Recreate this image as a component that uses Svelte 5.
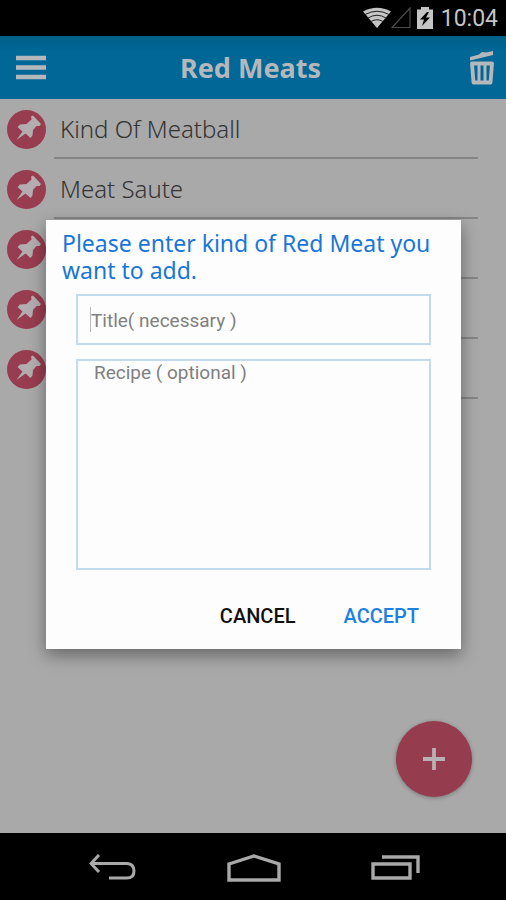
<script lang="ts">
	let items = $state(['Kind Of Meatball', 'Meat Saute', '', '', '']);
	let title = $state('');
	let recipe = $state('');
</script>

<div class="screen">
	<div class="status">
		<svg width="28" height="22" viewBox="0 0 28 22">
			<path d="M0 4.500Q14-3 28 4.500L14 21Z" fill="#c4c4c4" />
			<path d="M2 7.500Q14 1 26 7.500M5 11Q14 5.500 23 11M8 14.500Q14 11 20 14.500" fill="none" stroke="#222" stroke-width="1" />
		</svg>
		<svg class="signal" width="20" height="22" viewBox="0 0 20 22">
			<path d="M19 1V20.500H1Z" fill="none" stroke="#4c4c4c" stroke-width="1.200" />
		</svg>
		<svg class="battery" width="16" height="24" viewBox="0 0 16 24">
			<path d="M4 1H12V3.500H16V23H0V3.500H4Z" fill="#c4c4c4" />
			<path d="M10 6L3 13.500H7L5 20L13 11.500H9L12 6Z" fill="#000" />
		</svg>
		<span>10:04</span>
	</div>

	<header>
		<button aria-label="Menu">
			<svg width="30" height="26" viewBox="0 0 30 26">
				<path d="M0 3H30M0 12.500H30M0 22H30" stroke="#b5b8ba" stroke-width="4.500" />
			</svg>
		</button>
		<h1>Red Meats</h1>
		<button aria-label="Delete">
			<svg width="26" height="34" viewBox="0 0 26 34">
				<path d="M1 6L10 3.500L13 1L17 1.500L24 0V4L1 9.500Z" fill="#b5b8ba" />
				<path d="M3 12.500H23L21.500 31.500H4.500Z" fill="none" stroke="#b5b8ba" stroke-width="3.800" stroke-linejoin="round" />
				<path d="M10 13V31M16 13V31" stroke="#b5b8ba" stroke-width="3" />
			</svg>
		</button>
	</header>

	<main>
		<ul>
			{#each items as item}
				<li>
					<span class="pin">
						<svg width="39" height="39" viewBox="0 0 39 39">
							<path d="M24 6.500L26 5.500L34 14L32.500 16L29.500 16L26 20L25.500 25.500L23.500 28L18.500 23.500L9.500 30L15.500 21.500L10.500 17L13 14.500L19.500 14L24.500 9.500Z" fill="#b3adaf" />
						</svg>
					</span>
					<span class="name">{item}</span>
				</li>
			{/each}
		</ul>

		<button class="add" aria-label="Add">
			<svg width="22" height="22" viewBox="0 0 22 22">
				<path d="M11 0V22M0 11H22" stroke="#b8b0b2" stroke-width="3.800" />
			</svg>
		</button>

		<div class="overlay">
			<div class="dialog" role="dialog" aria-labelledby="dialog-title">
				<h2 id="dialog-title">Please enter kind of Red Meat you want to add.</h2>
				<div class="fields">
					<div class="field">
						<input type="text" aria-label="Title" placeholder="Title( necessary )" bind:value={title} />
						<span class="caret"></span>
					</div>
					<textarea aria-label="Recipe" placeholder="Recipe ( optional )" bind:value={recipe}></textarea>
				</div>
				<div class="actions">
					<button>CANCEL</button>
					<button class="accept">ACCEPT</button>
				</div>
			</div>
		</div>
	</main>

	<nav>
		<button aria-label="Back">
			<svg width="48" height="28" viewBox="0 0 48 28">
				<path d="M10 1L2 9.500L10 18M2 9.500H38Q45 10 45 17T38 24H20" fill="none" stroke="#a9a9a9" stroke-width="3" />
			</svg>
		</button>
		<button aria-label="Home">
			<svg width="54" height="28" viewBox="0 0 54 28">
				<path d="M2 10L27 2L52 10V26H2Z" fill="none" stroke="#a9a9a9" stroke-width="3.400" />
			</svg>
		</button>
		<button aria-label="Recent apps">
			<svg width="50" height="26" viewBox="0 0 50 26">
				<path d="M2 9H39V23H2ZM11 2H47V18" fill="none" stroke="#a9a9a9" stroke-width="3.400" />
			</svg>
		</button>
	</nav>
</div>

<style>
	:global(body) {
		margin: 0;
	}
	.screen {
		display: flex;
		flex-direction: column;
		min-height: 100vh;
		background: #a9a9a9;
		font-family: 'Noto Sans', sans-serif;
	}
	button {
		padding: 0;
		border: none;
		background: none;
		cursor: pointer;
	}
	svg {
		display: block;
	}
	.status {
		display: flex;
		align-items: center;
		justify-content: flex-end;
		height: 36px;
		padding-right: 8px;
		background: #000;
		color: #c4c4c4;
		font-family: Roboto, sans-serif;
		font-size: 23px;
	}
	.signal {
		margin-right: 6px;
	}
	.battery {
		margin-right: 8px;
	}
	header {
		display: grid;
		grid-template-columns: 30px 1fr 26px;
		align-items: center;
		height: 63px;
		padding: 0 11px 0 16px;
		background: linear-gradient(#005f87, #006797 16px);
	}
	h1 {
		margin: 0 14px 0 0;
		color: #b5b8ba;
		font-size: 27px;
		font-weight: 700;
		text-align: center;
	}
	main {
		position: relative;
		flex: 1;
	}
	ul {
		margin: 0;
		padding: 0 28px 0 7px;
		list-style: none;
	}
	li {
		display: flex;
		align-items: center;
		gap: 8px;
		height: 60px;
	}
	.pin {
		border-radius: 50%;
		background: #983d50;
	}
	.name {
		flex: 1;
		box-sizing: border-box;
		height: 60px;
		padding-left: 6px;
		border-bottom: 2px solid #858585;
		color: #333;
		font-size: 24px;
		font-weight: 300;
		line-height: 60px;
	}
	.add {
		position: absolute;
		right: 34px;
		bottom: 36px;
		display: grid;
		place-items: center;
		width: 76px;
		height: 76px;
		border-radius: 50%;
		background: #953c4e;
		box-shadow: 0 1px 4px rgba(0, 0, 0, 0.3);
	}
	.overlay {
		position: absolute;
		inset: -63px 0 0;
		display: grid;
		align-items: center;
		padding: 0 45px 0 46px;
	}
	.dialog {
		padding-top: 10px;
		background: #fdfdfd;
		box-shadow: 0 6px 16px rgba(0, 0, 0, 0.4);
	}
	h2 {
		margin: 0 16px 10px;
		color: #1976d8;
		font-size: 23px;
		font-weight: 400;
		line-height: 27px;
	}
	.fields {
		display: grid;
		gap: 14px;
		padding: 0 30px;
	}
	.field {
		position: relative;
		display: grid;
	}
	input,
	textarea {
		box-sizing: border-box;
		width: 100%;
		margin: 0;
		border: 2px solid #c2dbee;
		border-radius: 0;
		outline: none;
		background: none;
		color: #333;
		font-family: Roboto, sans-serif;
		font-size: 19px;
	}
	input {
		height: 51px;
		padding: 2px 13px 0;
	}
	textarea {
		height: 211px;
		padding: 0 16px;
		line-height: 24px;
		resize: none;
	}
	::placeholder {
		color: #808080;
		opacity: 1;
	}
	.caret {
		position: absolute;
		top: 13px;
		left: 14px;
		width: 1px;
		height: 25px;
		background: #bbb;
	}
	.actions {
		display: flex;
		justify-content: flex-end;
		gap: 48px;
		margin-top: 13px;
		padding-right: 42px;
	}
	.actions button {
		height: 66px;
		color: #111;
		font-family: Roboto, sans-serif;
		font-size: 20px;
		font-weight: 500;
	}
	.actions .accept {
		color: #1c80e0;
	}
	nav {
		display: flex;
		align-items: center;
		justify-content: space-between;
		height: 67px;
		padding: 0 85px 0 89px;
		background: #000;
	}
	nav button {
		padding-top: 3px;
	}
</style>
